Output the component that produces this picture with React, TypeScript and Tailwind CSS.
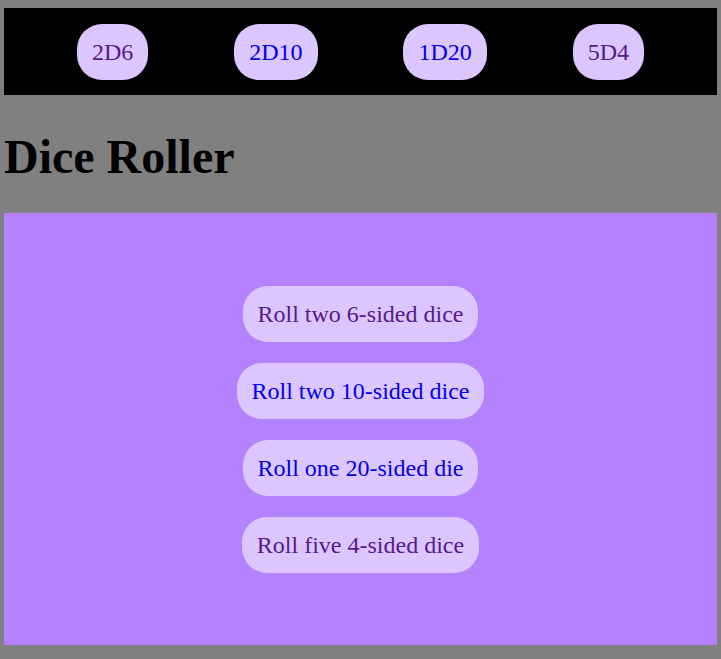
const navItems = [
  { label: "2D6", visited: true },
  { label: "2D10", visited: false },
  { label: "1D20", visited: false },
  { label: "5D4", visited: true },
];

const rollItems = [
  { label: "Roll two 6-sided dice", visited: true },
  { label: "Roll two 10-sided dice", visited: false },
  { label: "Roll one 20-sided die", visited: false },
  { label: "Roll five 4-sided dice", visited: true },
];

function DiceLink({ label, visited }: { label: string; visited: boolean }) {
  return (
    <a
      href="#"
      className={`block rounded-[25px] bg-[#dcc6ff] px-[15px] py-[14px] text-[24px] leading-[28px] ${
        visited ? "text-[#551a8b]" : "text-[#0000ee]"
      }`}
    >
      {label}
    </a>
  );
}

export default function App() {
  return (
    <div className="min-h-screen bg-[#808080] px-[4px] pt-[8px] font-['Liberation_Serif',serif]">
      {/* Навигация */}
      <nav className="flex h-[87px] items-center justify-around bg-black px-[30px]">
        {navItems.map((item) => (
          <DiceLink key={item.label} {...item} />
        ))}
      </nav>

      <h1 className="mt-[34px] mb-[29px] text-[48px] font-bold leading-[55px] text-black">
        Dice Roller
      </h1>

      {/* Кнопки бросков */}
      <div className="flex h-[432px] flex-col items-center justify-center gap-[21px] bg-[#b482ff]">
        {rollItems.map((item) => (
          <DiceLink key={item.label} {...item} />
        ))}
      </div>
    </div>
  );
}
